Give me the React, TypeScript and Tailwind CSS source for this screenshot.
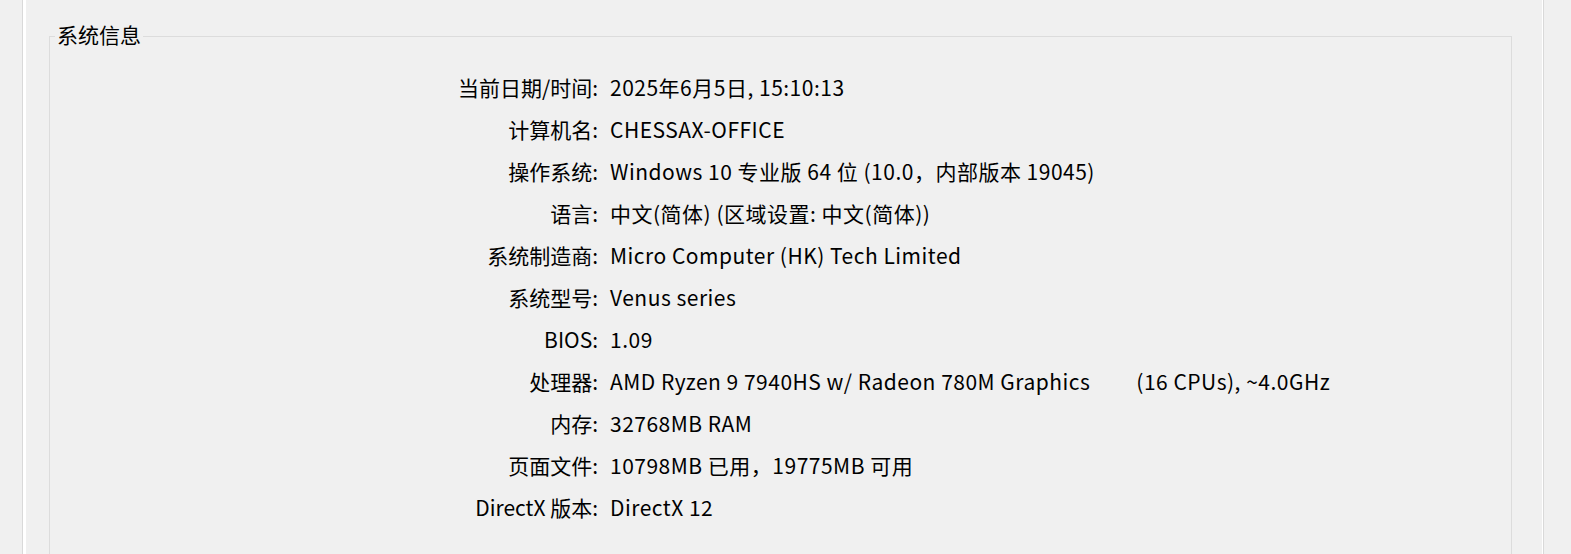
const ROWS: { label: string; value: React.ReactNode }[] = [
  { label: "当前日期/时间:", value: "2025年6月5日, 15:10:13" },
  { label: "计算机名:", value: "CHESSAX-OFFICE" },
  { label: "操作系统:", value: "Windows 10 专业版 64 位 (10.0，内部版本 19045)" },
  { label: "语言:", value: "中文(简体) (区域设置: 中文(简体))" },
  { label: "系统制造商:", value: "Micro Computer (HK) Tech Limited" },
  { label: "系统型号:", value: "Venus series" },
  { label: "BIOS:", value: "1.09" },
  {
    label: "处理器:",
    value: (
      <>
        AMD Ryzen 9 7940HS w/ Radeon 780M Graphics
        <span className="ml-[46px]">(16 CPUs), ~4.0GHz</span>
      </>
    ),
  },
  { label: "内存:", value: "32768MB RAM" },
  { label: "页面文件:", value: "10798MB 已用，19775MB 可用" },
  { label: "DirectX 版本:", value: "DirectX 12" },
];

export default function App() {
  return (
    <div
      className="flex h-[554px] w-full overflow-hidden bg-[#f0f0f0] text-[21px] text-black"
      style={{ fontFamily: '"Noto Sans CJK SC", "Noto Sans", sans-serif' }}
    >
      <div className="w-[22px] shrink-0" />
      <div className="w-px shrink-0 bg-[#d9d9d9]" />
      <div className="w-[3px] shrink-0 bg-white" />

      <main className="flex-1 pl-[23px] pr-[30px] pt-[24px]">
        <fieldset className="h-[600px] border border-[#dcdcdc] p-0">
          <legend className="ml-[5px] px-[2px] leading-[24px]">
            <span className="relative -top-[2px]">系统信息</span>
          </legend>
          <div className="grid grid-cols-[548px_1fr] gap-x-[12px] pt-[18px]">
            {ROWS.map((row) => (
              <div key={row.label} className="contents">
                <div className="h-[42px] text-right leading-[42px]">{row.label}</div>
                <div className="h-[42px] whitespace-nowrap leading-[42px] tracking-[0.5px]">
                  {row.value}
                </div>
              </div>
            ))}
          </div>
        </fieldset>
      </main>

      <div className="w-px shrink-0 bg-white" />
      <div className="w-px shrink-0 bg-[#d9d9d9]" />
      <div className="w-[27px] shrink-0" />
    </div>
  );
}
